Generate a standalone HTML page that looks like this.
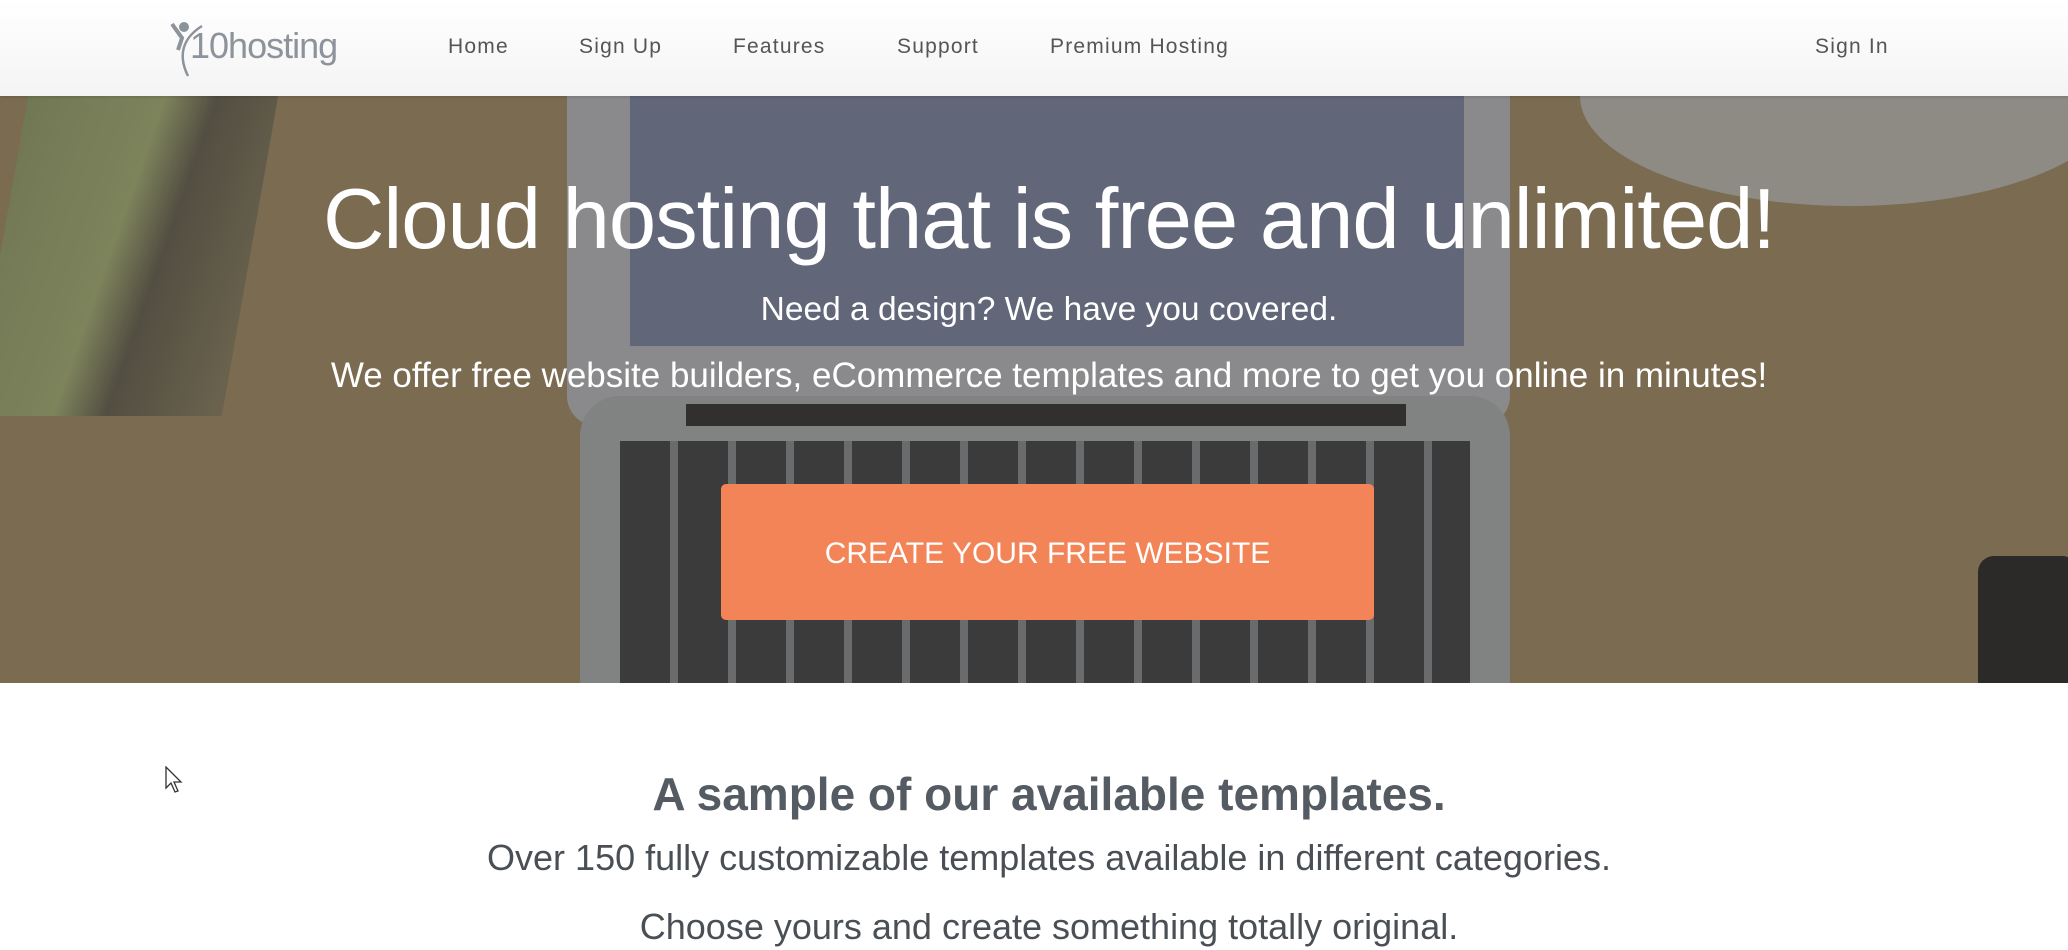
<!DOCTYPE html>
<html><head><meta charset="utf-8"><style>
*{margin:0;padding:0;box-sizing:border-box}
body{width:2068px;height:950px;overflow:hidden;background:#fff;font-family:"Liberation Sans",Arial,sans-serif;position:relative}
.nav{position:absolute;left:0;top:0;width:2068px;height:96px;background:linear-gradient(#fff,#f4f4f4);box-shadow:0 1px 3px rgba(0,0,0,.15);z-index:5}
.nav a{position:absolute;top:35px;font-size:21px;letter-spacing:1.2px;color:#555;text-decoration:none}
.hero{position:absolute;left:0;top:96px;width:2068px;height:587px;background:#86765a;overflow:hidden}
.hero div.s{position:absolute}
.t{position:absolute;left:0;width:2068px;text-align:center;color:#fff;padding-left:30px}
</style></head><body>
<div class="nav">
<svg style="position:absolute;left:168px;top:18px" width="190" height="62" viewBox="0 0 190 62">
<circle cx="16" cy="9" r="5" fill="#8d939b"/>
<path d="M4 6 L14 20 L10 32" stroke="#8d939b" stroke-width="4" fill="none"/>
<path d="M34 8 C18 18 8 34 20 58" stroke="#8d939b" stroke-width="2.5" fill="none"/>
<text x="22" y="40" font-family="Liberation Sans,Arial,sans-serif" font-size="36" fill="#8d939b" letter-spacing="-1">10hosting</text>
</svg>
<a style="left:448px">Home</a>
<a style="left:579px">Sign Up</a>
<a style="left:733px">Features</a>
<a style="left:897px">Support</a>
<a style="left:1050px">Premium Hosting</a>
<a style="left:1815px">Sign In</a>
</div>
<div class="hero">
<div class="s" style="left:0;top:0;width:250px;height:320px;background:linear-gradient(100deg,#78895e 0,#8a9a6a 45%,#4a4a44 62%,#6f6a56 100%);transform:skewX(-10deg);opacity:.75"></div>
<div class="s" style="left:1580px;top:-110px;width:540px;height:220px;border-radius:50%;background:#9c9a96"></div>
<div class="s" style="left:567px;top:0;width:943px;height:330px;background:#98989c;border-radius:0 0 30px 30px"></div>
<div class="s" style="left:630px;top:0;width:834px;height:250px;background:#6a7088"></div>
<div class="s" style="left:580px;top:300px;width:930px;height:300px;background:#8e9092;border-radius:40px 40px 0 0"></div>
<div class="s" style="left:686px;top:308px;width:720px;height:22px;background:#333"></div>
<div class="s" style="left:620px;top:345px;width:850px;height:250px;background:repeating-linear-gradient(90deg,#3e3f41 0,#3e3f41 50px,#74767a 50px,#74767a 58px)"></div>
<div class="s" style="left:1978px;top:460px;width:100px;height:140px;background:#2c2c2c;border-radius:16px"></div>
<div class="s" style="left:0;top:0;width:2068px;height:587px;background:rgba(40,32,20,.12)"></div>
</div>
<div class="t" style="top:168px;font-size:85px;line-height:104px;letter-spacing:-1px">Cloud hosting that is free and unlimited!</div>
<div class="t" style="top:289px;font-size:33.5px;line-height:42px">Need a design? We have you covered.</div>
<div class="t" style="top:355px;font-size:35px;line-height:42px">We offer free website builders, eCommerce templates and more to get you online in minutes!</div>
<div style="position:absolute;left:721px;top:484px;width:653px;height:136px;background:#f38458;border-radius:5px;color:#fff;font-size:30px;text-align:center;line-height:140px;z-index:3">CREATE YOUR FREE WEBSITE</div>
<div class="t" style="top:765px;font-size:46px;line-height:58px;font-weight:bold;color:#555b62">A sample of our available templates.</div>
<div class="t" style="top:836px;font-size:36px;line-height:44px;color:#4a4f55">Over 150 fully customizable templates available in different categories.</div>
<div class="t" style="top:905px;font-size:36px;line-height:44px;color:#4a4f55">Choose yours and create something totally original.</div>
<svg style="position:absolute;left:165px;top:766px" width="20" height="28" viewBox="0 0 20 28"><path d="M1 1 L1 22 L6 17 L10 26 L13 25 L9 16 L16 16 Z" fill="#fff" stroke="#333" stroke-width="1.3"/></svg>
</body></html>
